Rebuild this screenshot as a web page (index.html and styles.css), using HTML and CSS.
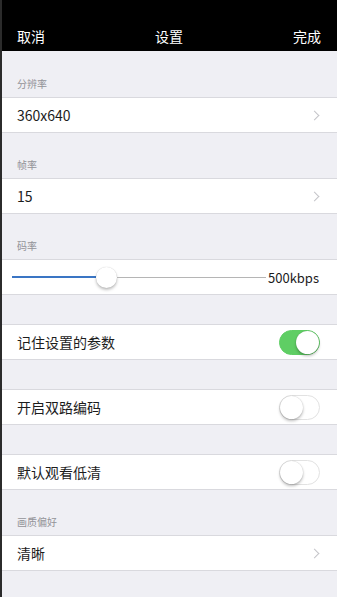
FILE: index.html
```html
<!DOCTYPE html>
<html lang="zh">
<head>
    <meta charset="UTF-8">
    <title>设置</title>
    <link rel="stylesheet" href="styles.css">
</head>
<body>
<div class="page">
    <!--顶部导航-->
    <div class="nav">
        <span class="nav-btn">取消</span>
        <span class="nav-title">设置</span>
        <span class="nav-btn">完成</span>
    </div>

    <!--分辨率-->
    <div class="gap gap-label first"><span>分辨率</span></div>
    <div class="group">
        <div class="cell">
            <span class="cell-text">360x640</span>
            <span class="arrow"></span>
        </div>
    </div>

    <!--帧率-->
    <div class="gap gap-label"><span>帧率</span></div>
    <div class="group">
        <div class="cell">
            <span class="cell-text">15</span>
            <span class="arrow"></span>
        </div>
    </div>

    <!--码率-->
    <div class="gap gap-label"><span>码率</span></div>
    <div class="group">
        <div class="cell slider-cell">
            <div class="slider">
                <div class="track-on" style="width: 33%"></div>
                <div class="thumb"></div>
                <div class="track-off"></div>
            </div>
            <span class="slider-val">500kbps</span>
        </div>
    </div>

    <div class="gap"></div>
    <div class="group">
        <div class="cell">
            <span class="cell-text">记住设置的参数</span>
            <span class="switch on"><i></i></span>
        </div>
    </div>

    <div class="gap"></div>
    <div class="group">
        <div class="cell">
            <span class="cell-text">开启双路编码</span>
            <span class="switch"><i></i></span>
        </div>
    </div>

    <div class="gap"></div>
    <div class="group">
        <div class="cell">
            <span class="cell-text">默认观看低清</span>
            <span class="switch"><i></i></span>
        </div>
    </div>

    <!--画质偏好-->
    <div class="gap gap-label"><span>画质偏好</span></div>
    <div class="group">
        <div class="cell">
            <span class="cell-text">清晰</span>
            <span class="arrow"></span>
        </div>
    </div>
</div>
</body>
</html>
```

FILE: styles.css
```css
html, body {
    margin: 0;
    padding: 0;
    height: 100%;
}

body {
    background-color: #efeff4;
    font-family: "Noto Sans CJK SC", "Liberation Sans", sans-serif;
}

.page {
    min-height: 100%;
    border-left: 2px solid #2b2b2b;
    box-sizing: border-box;
    overflow: hidden;
}

/*顶部导航*/
.nav {
    height: 51px;
    box-sizing: border-box;
    padding: 20px 16px 0 15px;
    background-color: #000;
    color: #fff;
    font-size: 14px;
    display: flex;
    align-items: center;
    justify-content: space-between;
}

/*灰色间隔*/
.gap {
    height: 29px;
}

.gap-label {
    height: 45px;
    display: flex;
    align-items: flex-end;
    padding: 0 0 7px 15px;
    box-sizing: border-box;
    font-size: 10px;
    line-height: 12px;
    color: #939398;
}

.gap-label.first {
    height: 46px;
}

.group {
    background-color: #fff;
    border-top: 1px solid #d9d9de;
    border-bottom: 1px solid #d9d9de;
}

.cell {
    height: 34px;
    display: flex;
    align-items: center;
    justify-content: space-between;
    padding: 0 16px 0 15px;
}

.cell-text {
    font-size: 14px;
    color: #1c1c1c;
}

/*右箭头*/
.arrow {
    width: 6px;
    height: 6px;
    border-top: 1px solid #c4c4c9;
    border-right: 1px solid #c4c4c9;
    transform: rotate(45deg);
    margin-right: 3px;
}

/*滑块*/
.slider-cell {
    padding-left: 10px;
}

.slider {
    flex: 1;
    display: flex;
    align-items: center;
    height: 22px;
}

.track-on {
    height: 2px;
    background-color: #3a75c4;
}

.track-off {
    flex: 1;
    height: 1px;
    background-color: #b5b5b5;
}

.thumb {
    width: 21px;
    height: 21px;
    border-radius: 50%;
    background-color: #fff;
    box-shadow: 0 2px 3px rgba(0, 0, 0, 0.25), 0 0 1px rgba(0, 0, 0, 0.2);
    flex-shrink: 0;
}

.slider-val {
    font-size: 13px;
    color: #1c1c1c;
    margin-left: 2px;
    margin-right: 2px;
}

/*开关*/
.switch {
    width: 41px;
    height: 25px;
    border-radius: 13px;
    box-sizing: border-box;
    border: 1px solid #e2e2e2;
    background-color: #fff;
    position: relative;
    margin-right: 1px;
}

.switch i {
    position: absolute;
    top: 0;
    left: 0;
    width: 23px;
    height: 23px;
    border-radius: 50%;
    background-color: #fff;
    box-shadow: 0 2px 3px rgba(0, 0, 0, 0.25), 0 0 1px rgba(0, 0, 0, 0.25);
}

.switch.on {
    background-color: #5fce64;
    border-color: #5fce64;
}

.switch.on i {
    left: 16px;
}
```
